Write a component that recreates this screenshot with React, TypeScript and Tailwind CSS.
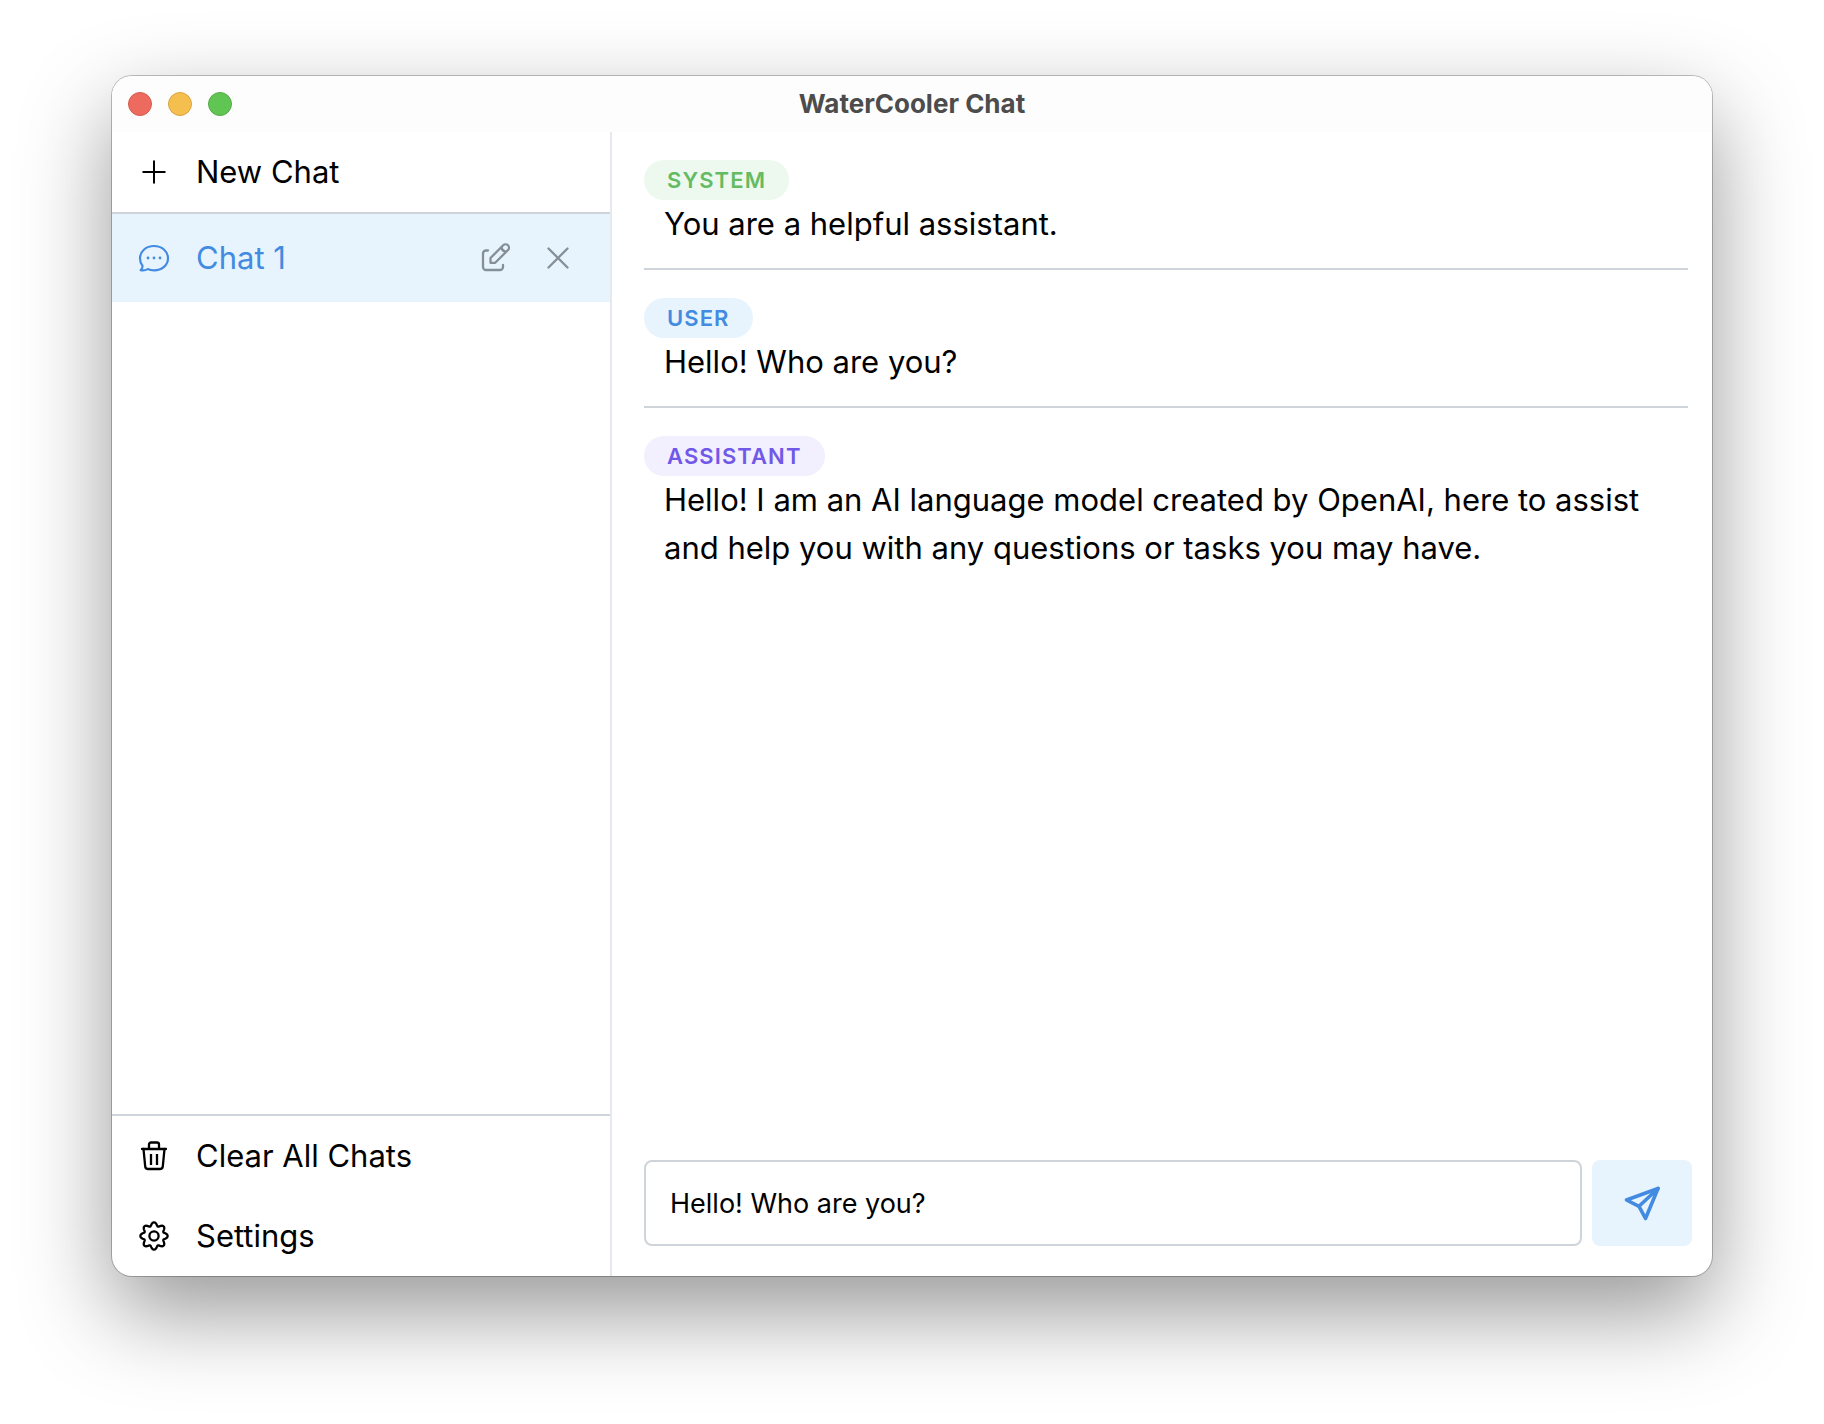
import { useState } from "react";
import type { ReactNode } from "react";

function Icon({ children }: { children: ReactNode }) {
  return (
    <svg
      viewBox="0 0 32 32"
      className="size-8 shrink-0"
      fill="none"
      stroke="currentColor"
      strokeWidth="2.3"
      strokeLinecap="round"
      strokeLinejoin="round"
      aria-hidden="true"
    >
      {children}
    </svg>
  );
}

const PlusIcon = () => (
  <Icon>
    <path d="M16 4.500V27.500M4.500 16H27.500" strokeWidth="2" strokeLinecap="butt" />
  </Icon>
);

const ChatIcon = () => (
  <Icon>
    <path
      strokeWidth="2.2"
      d="M2.6 28.2C4.2 26.6 4.8 25 4.4 23.6C2.9 21.6 2 18.9 2 16.2C2 9.2 8.2 4 16 4S30 9.2 30 16.2S23.8 28.400 16 28.400C13.600 28.400 11.600 28 9.800 27.100C7.600 28.300 5 28.700 2.600 28.200Z"
    />
    <g fill="currentColor" stroke="none">
      <circle cx="10" cy="16" r="1.400" />
      <circle cx="16" cy="16" r="1.400" />
      <circle cx="22" cy="16" r="1.400" />
    </g>
  </Icon>
);

const EditIcon = () => (
  <Icon>
    <path d="M8 8.500H6A3 3 0 0 0 3 11.500V25A3 3 0 0 0 6 28H20A3 3 0 0 0 23 25V23" />
    <path d="M10.500 16L23.200 3.300A3.300 3.300 0 0 1 28 8L15.200 20.800H10.500Z" />
    <path d="M21.500 5.500Q22 9 25.800 9.800" />
  </Icon>
);

const CloseIcon = () => (
  <Icon>
    <path d="M6.500 6.500L25.500 25.500M25.500 6.500L6.500 25.500" />
  </Icon>
);

const TrashIcon = () => (
  <Icon>
    <path d="M4 9H28M11 9V4.500A2 2 0 0 1 13 2.500H19A2 2 0 0 1 21 4.500V9" />
    <path d="M5.500 9L7.200 26.300A3 3 0 0 0 10.200 29H21.800A3 3 0 0 0 24.800 26.300L26.500 9" />
    <path d="M13 14V25M19 14V25" strokeLinecap="butt" />
  </Icon>
);

const gearOutline = Array.from({ length: 160 }, (_, i) => {
  const a = (i / 160) * Math.PI * 2;
  const r = 12 + 1.75 * Math.cos(8 * a) - 0.15 * Math.cos(16 * a);
  return `${(16 + r * Math.cos(a)).toFixed(2)},${(16 + r * Math.sin(a)).toFixed(2)}`;
}).join(" ");

const GearIcon = () => (
  <Icon>
    <polygon points={gearOutline} />
    <circle cx="16" cy="16" r="4.600" />
  </Icon>
);

const SendIcon = () => (
  <svg viewBox="0 0 36 36" className="size-9" fill="none" stroke="currentColor" strokeWidth="3.6" strokeLinecap="round" strokeLinejoin="round" aria-hidden="true">
    <path d="M34 3.500L2.500 15L15 21.300L21.500 33.500Z" />
    <path d="M15 21.300L34 3.500" />
  </svg>
);

const messages = [
  { role: "SYSTEM", tone: "bg-[#edf9ef] text-[#65bb62]", text: "You are a helpful assistant." },
  { role: "USER", tone: "bg-[#e7f4fe] text-[#428be1]", text: "Hello! Who are you?" },
  {
    role: "ASSISTANT",
    tone: "bg-[#f2f0fe] text-[#7058e8]",
    text: "Hello! I am an AI language model created by OpenAI, here to assist and help you with any questions or tasks you may have.",
  },
];

function SidebarButton({ icon, label }: { icon: ReactNode; label: string }) {
  return (
    <button type="button" className="flex h-20 w-full items-center gap-[26px] px-[26px] text-left">
      {icon}
      <span>{label}</span>
    </button>
  );
}

export default function App() {
  const [draft, setDraft] = useState("Hello! Who are you?");

  return (
    <div className="flex min-h-screen flex-col bg-white px-28 pt-[76px] pb-[148px] font-['Inter',sans-serif] text-[31px] leading-[48px] text-black">
      <div className="flex flex-1 flex-col overflow-hidden rounded-[20px] bg-white shadow-[0_0_0_1px_rgba(0,0,0,0.24),0_36px_90px_rgba(0,0,0,0.41)]">
        <header className="grid h-14 grid-cols-[1fr_auto_1fr] items-center bg-[#fdfdfd] px-4">
          <div className="flex gap-4">
            <button type="button" aria-label="Close window" className="size-6 rounded-full border border-[#d65a50] bg-[#ed6a5e]" />
            <button type="button" aria-label="Minimize window" className="size-6 rounded-full border border-[#d9a441] bg-[#f5bf4f]" />
            <button type="button" aria-label="Zoom window" className="size-6 rounded-full border border-[#54ab47] bg-[#61c554]" />
          </div>
          <h1 className="text-[26px] font-bold text-[#4c4c4c]">WaterCooler Chat</h1>
        </header>

        <div className="flex flex-1">
          <aside className="flex w-[500px] shrink-0 flex-col border-r-2 border-[#e6eaef]">
            <SidebarButton icon={<PlusIcon />} label="New Chat" />
            <nav className="flex-1 border-y-2 border-[#ced4da]">
              <div className="flex h-[88px] items-center bg-[#e7f4fe] pr-9 pl-[26px]">
                <button type="button" className="flex flex-1 items-center gap-[26px] text-left text-[#428be1]">
                  <ChatIcon />
                  <span>Chat 1</span>
                </button>
                <div className="flex gap-[30px] text-[#868e96]">
                  <button type="button" aria-label="Rename chat">
                    <EditIcon />
                  </button>
                  <button type="button" aria-label="Delete chat">
                    <CloseIcon />
                  </button>
                </div>
              </div>
            </nav>
            <SidebarButton icon={<TrashIcon />} label="Clear All Chats" />
            <SidebarButton icon={<GearIcon />} label="Settings" />
          </aside>

          <main className="flex min-w-0 flex-1 flex-col justify-between pr-5 pb-[30px] pl-8">
            <div className="pr-1">
              {messages.map((m) => (
                <article key={m.role} className="border-b-2 border-[#ced4da] pt-7 pb-5 last:border-b-0">
                  <div className="flex">
                    <span className={`h-10 rounded-full px-[23px] text-[22px] leading-10 font-semibold tracking-wider ${m.tone}`}>{m.role}</span>
                  </div>
                  <p className="px-5">{m.text}</p>
                </article>
              ))}
            </div>

            <form className="flex gap-[10px]" onSubmit={(e) => e.preventDefault()}>
              <input
                type="text"
                aria-label="Message"
                value={draft}
                onChange={(e) => setDraft(e.target.value)}
                className="h-[86px] min-w-0 flex-1 rounded-lg border-2 border-[#ced4da] bg-white px-6 text-[27px] outline-none"
              />
              <button type="submit" aria-label="Send" className="flex h-[86px] w-[100px] items-center justify-center rounded-lg bg-[#e7f4fe] text-[#428be1]">
                <SendIcon />
              </button>
            </form>
          </main>
        </div>
      </div>
    </div>
  );
}
